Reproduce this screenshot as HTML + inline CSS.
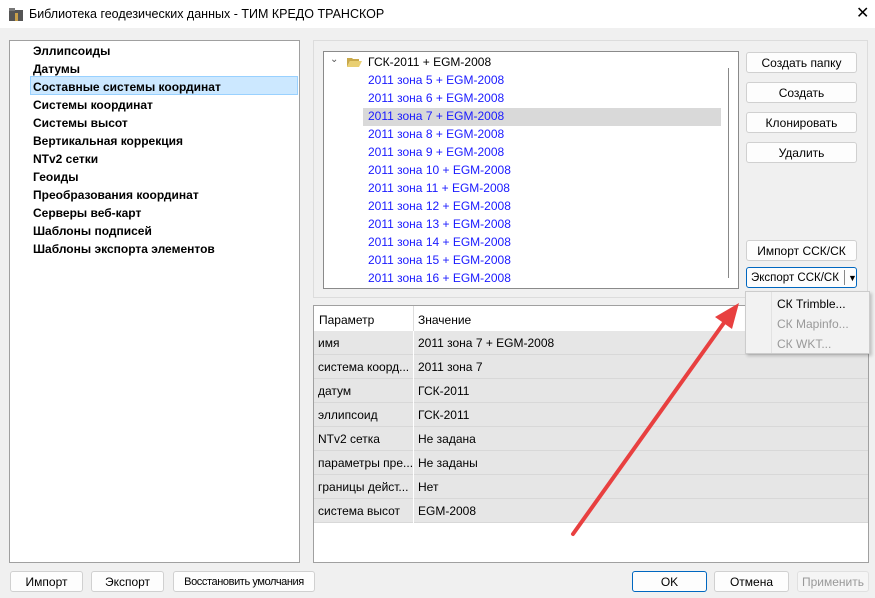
<!DOCTYPE html><html><head><meta charset="utf-8"><style>
*{box-sizing:border-box;margin:0;padding:0}
html,body{width:875px;height:598px;overflow:hidden}
body{background:#f0f0f0;font-family:"Liberation Sans","DejaVu Sans",sans-serif;font-size:12px;color:#000;position:relative}
.a{position:absolute;white-space:nowrap}
.btn{position:absolute;white-space:nowrap;overflow:hidden;background:#fdfdfd;border:1px solid #d0d0d0;border-radius:3px;text-align:center;font-size:12px;line-height:20px}
.lst div{position:absolute;left:23px;font-weight:bold;font-size:12px;white-space:nowrap}
.tr{position:absolute;left:44px;color:#1a1aff;font-size:12px;white-space:nowrap}
.row{position:absolute;left:0;width:554px;height:24px;border-bottom:1px solid #d8d8d8;background:#e6e6e6}
.row span{position:absolute;top:5px;font-size:12px;white-space:nowrap}
</style></head><body>
<div class="a" style="left:0;top:0;width:875px;height:28px;background:#fff"></div>
<svg class="a" style="left:8px;top:6px" width="16" height="16"><rect x="1" y="4" width="14" height="11" fill="#555"/><rect x="1" y="2" width="6" height="3" fill="#777"/><rect x="7" y="7" width="3" height="8" fill="#c9a04a"/></svg>
<div class="a" style="left:29px;top:7px;font-size:12.5px">Библиотека геодезических данных - ТИМ КРЕДО ТРАНСКОР</div>
<div class="a" style="left:856px;top:3px;font-size:16px">✕</div>

<div class="a lst" style="left:9px;top:40px;width:291px;height:523px;background:#fff;border:1px solid #a0a0a0">
<span class="a" style="left:20px;top:35px;width:268px;height:19px;background:#cce8ff;border:1px solid #99d1ff"></span>
<div style="top:3px">Эллипсоиды</div><div style="top:21px">Датумы</div><div style="top:39px">Составные системы координат</div><div style="top:57px">Системы координат</div><div style="top:75px">Системы высот</div><div style="top:93px">Вертикальная коррекция</div><div style="top:111px">NTv2 сетки</div><div style="top:129px">Геоиды</div><div style="top:147px">Преобразования координат</div><div style="top:165px">Серверы веб-карт</div><div style="top:183px">Шаблоны подписей</div><div style="top:201px">Шаблоны экспорта элементов</div>
</div>

<div class="a" style="left:313px;top:40px;width:555px;height:258px;border:1px solid #dcdcdc"></div>
<div class="a" style="left:323px;top:51px;width:416px;height:238px;background:#fff;border:1px solid #8a8a8a;overflow:hidden">
<div class="a" style="left:39px;top:56px;width:358px;height:18px;background:#d9d9d9"></div>
<div class="a" style="left:404px;top:16px;width:1px;height:210px;background:#888"></div>
<div class="a" style="left:6px;top:2px;font-size:10px;color:#555">⌄</div>
<svg class="a" style="left:22px;top:4px" width="17" height="12"><path d="M1 2h5l1 1h6v2H4L1 11z" fill="#c9a94a"/><path d="M4 5h12l-3 6H1z" fill="#e9cf72"/></svg>
<div class="a" style="left:44px;top:3px">ГСК-2011 + EGM-2008</div>
<div class="tr" style="top:21px">2011 зона 5 + EGM-2008</div>
<div class="tr" style="top:39px">2011 зона 6 + EGM-2008</div>
<div class="tr" style="top:57px">2011 зона 7 + EGM-2008</div>
<div class="tr" style="top:75px">2011 зона 8 + EGM-2008</div>
<div class="tr" style="top:93px">2011 зона 9 + EGM-2008</div>
<div class="tr" style="top:111px">2011 зона 10 + EGM-2008</div>
<div class="tr" style="top:129px">2011 зона 11 + EGM-2008</div>
<div class="tr" style="top:147px">2011 зона 12 + EGM-2008</div>
<div class="tr" style="top:165px">2011 зона 13 + EGM-2008</div>
<div class="tr" style="top:183px">2011 зона 14 + EGM-2008</div>
<div class="tr" style="top:201px">2011 зона 15 + EGM-2008</div>
<div class="tr" style="top:219px">2011 зона 16 + EGM-2008</div>
</div>
<div class="btn" style="left:746px;top:52px;width:111px;height:21px">Создать папку</div>
<div class="btn" style="left:746px;top:82px;width:111px;height:21px">Создать</div>
<div class="btn" style="left:746px;top:112px;width:111px;height:21px">Клонировать</div>
<div class="btn" style="left:746px;top:142px;width:111px;height:21px">Удалить</div>
<div class="btn" style="left:746px;top:240px;width:111px;height:21px">Импорт ССК/СК</div>
<div class="btn" style="left:746px;top:267px;width:111px;height:21px;border-color:#0067c0;text-align:left;padding-left:4px;font-size:11.5px">Экспорт ССК/СК<span class="a" style="left:97px;top:2px;width:1px;height:15px;background:#888"></span><span class="a" style="left:101px;top:0;font-size:9px">▼</span></div>

<div class="a" style="left:313px;top:305px;width:556px;height:258px;background:#fff;border:1px solid #a0a0a0;overflow:hidden">
<div class="a" style="left:5px;top:7px">Параметр</div><div class="a" style="left:104px;top:7px">Значение</div>
<div class="a" style="left:99px;top:0;width:1px;height:25px;background:#ddd"></div>
<div class="row" style="top:25px"><span style="left:4px">имя</span><span style="left:104px">2011 зона 7 + EGM-2008</span></div>
<div class="row" style="top:49px"><span style="left:4px">система коорд...</span><span style="left:104px">2011 зона 7</span></div>
<div class="row" style="top:73px"><span style="left:4px">датум</span><span style="left:104px">ГСК-2011</span></div>
<div class="row" style="top:97px"><span style="left:4px">эллипсоид</span><span style="left:104px">ГСК-2011</span></div>
<div class="row" style="top:121px"><span style="left:4px">NTv2 сетка</span><span style="left:104px">Не задана</span></div>
<div class="row" style="top:145px"><span style="left:4px">параметры пре...</span><span style="left:104px">Не заданы</span></div>
<div class="row" style="top:169px"><span style="left:4px">границы дейст...</span><span style="left:104px">Нет</span></div>
<div class="row" style="top:193px"><span style="left:4px">система высот</span><span style="left:104px">EGM-2008</span></div>
<div class="a" style="left:99px;top:25px;width:1px;height:192px;background:#fff"></div>
</div>

<div class="a" style="left:745px;top:291px;width:125px;height:63px;background:#f2f2f2;border:1px solid #ccc;box-shadow:2px 2px 3px rgba(0,0,0,.2)">
<div class="a" style="left:25px;top:0;width:1px;height:61px;background:#e2e2e2"></div>
<div class="a" style="left:31px;top:5px">СК Trimble...</div>
<div class="a" style="left:31px;top:25px;color:#999">СК Mapinfo...</div>
<div class="a" style="left:31px;top:45px;color:#999">СК WKT...</div>
</div>

<svg class="a" style="left:0;top:0" width="875" height="598"><line x1="573" y1="534" x2="726" y2="320" stroke="#e84040" stroke-width="4" stroke-linecap="round"/><polygon points="739,303 732,329 715,317" fill="#e84040"/></svg>

<div class="btn" style="left:10px;top:571px;width:73px;height:21px">Импорт</div>
<div class="btn" style="left:91px;top:571px;width:73px;height:21px">Экспорт</div>
<div class="btn" style="left:173px;top:571px;width:142px;height:21px;font-size:11px;letter-spacing:-0.4px">Восстановить умолчания</div>
<div class="btn" style="left:632px;top:571px;width:75px;height:21px;border-color:#0067c0">OK</div>
<div class="btn" style="left:714px;top:571px;width:75px;height:21px">Отмена</div>
<div class="btn" style="left:797px;top:571px;width:72px;height:21px;color:#999;background:#f5f5f5;border-color:#e0e0e0">Применить</div>
</body></html>
